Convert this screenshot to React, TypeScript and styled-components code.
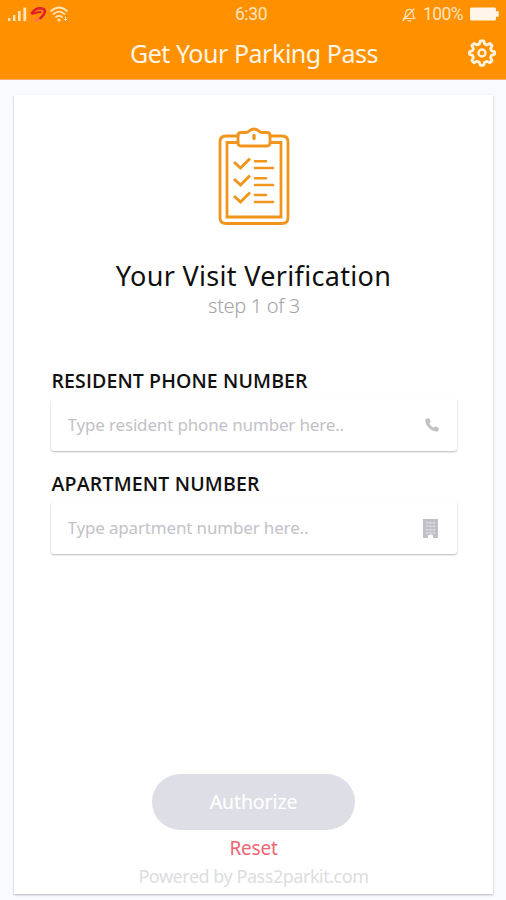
import React from "react";
import styled, { createGlobalStyle } from "styled-components";

const GlobalStyle = createGlobalStyle`
  *, *::before, *::after { box-sizing: border-box; }
  html, body { margin: 0; padding: 0; }
  body { background: #f8faff; font-family: "Noto Sans", "Open Sans", sans-serif; }
`;

const Screen = styled.div`
  width: 506px;
  height: 900px;
  display: flex;
  flex-direction: column;
  overflow: hidden;
  background: #f8faff;
`;

const Header = styled.header`
  height: 80px;
  flex: none;
  background: #ff9100;
  border-bottom: 1px solid #ffab66;
`;

const StatusBar = styled.div`
  height: 27px;
  display: grid;
  grid-template-columns: 1fr auto 1fr;
  align-items: center;
  padding: 0 7px 0 7px;
  font: 400 17.5px/27px Roboto, sans-serif;
  color: #ffe3bd;
`;

const StatusGroup = styled.div<{ $end?: boolean }>`
  display: flex;
  align-items: center;
  justify-content: ${(p) => (p.$end ? "flex-end" : "flex-start")};
  gap: ${(p) => (p.$end ? "7px" : "3px")};
`;

const Clock = styled.span`
  margin: 1px 2px 0 -2px;
  letter-spacing: -0.4px;
`;

const Percent = styled.span`
  letter-spacing: -0.55px;
`;

const TitleBar = styled.div`
  height: 52px;
  display: grid;
  grid-template-columns: 1fr auto 1fr;
  align-items: center;
  padding: 0 10px;
`;

const Title = styled.h1`
  grid-column: 2;
  margin: 0 -1px 0 1px;
  font-size: 25px;
  font-weight: 400;
  line-height: 50px;
  letter-spacing: -0.46px;
  color: #fff5e6;
  white-space: nowrap;
`;

const SettingsButton = styled.button`
  justify-self: end;
  width: 28px;
  height: 28px;
  padding: 0;
  border: 0;
  background: none;
  color: #fff3df;
  display: flex;
`;

const Card = styled.main`
  width: 479px;
  height: 799px;
  margin: 15px 0 0 14px;
  flex: none;
  padding: 32px 37px 0;
  background: #fff;
  box-shadow: 0 1px 2px rgba(30, 35, 45, 0.32);
  display: flex;
  flex-direction: column;
  align-items: center;
`;

const Heading = styled.h2`
  margin: 30px 0 0;
  font-size: 27px;
  font-weight: 400;
  line-height: 36px;
  letter-spacing: 0.32px;
  color: #101010;
  white-space: nowrap;
`;

const Step = styled.p`
  margin: -1px 0 0 1px;
  font-size: 20px;
  font-weight: 300;
  line-height: 25px;
  letter-spacing: -0.35px;
  color: #a2a2a8;
`;

const Form = styled.form`
  width: 406px;
  margin-top: 49px;
  display: flex;
  flex-direction: column;
  gap: 19px;
`;

const Field = styled.div`
  height: 84px;
  display: flex;
  flex-direction: column;
`;

const Label = styled.label<{ $spacing: number }>`
  height: 32px;
  font: 600 19.5px/27px "Open Sans", sans-serif;
  letter-spacing: ${(p) => p.$spacing}px;
  color: #111;
  padding-left: 1px;
  white-space: nowrap;
`;

const InputBox = styled.div`
  height: 52px;
  display: flex;
  align-items: center;
  justify-content: space-between;
  padding: 0 18px 0 17px;
  border-radius: 3px;
  background: #fff;
  box-shadow: 0 1px 2px rgba(0, 0, 0, 0.28);
  color: #c2c2c8;
`;

const Input = styled.input`
  width: 320px;
  padding: 0;
  border: 0;
  outline: 0;
  background: transparent;
  font: 400 17px/26px "Noto Sans", sans-serif;
  letter-spacing: -0.16px;
  &::placeholder { color: #c2c2c8; opacity: 1; }
`;

const Actions = styled.div`
  margin-top: 220px;
  display: flex;
  flex-direction: column;
  align-items: center;
`;

const Authorize = styled.button`
  width: 203px;
  height: 56px;
  padding: 0;
  border: 0;
  border-radius: 28px;
  background: #dedfe6;
  color: #fff;
  font: 400 19.5px/54px "Noto Sans", sans-serif;
  letter-spacing: -0.1px;
`;

const Reset = styled.button`
  margin-top: 3px;
  height: 30px;
  padding: 0;
  border: 0;
  background: none;
  color: #ef6673;
  font: 400 19px/30px "Noto Sans", sans-serif;
  letter-spacing: -0.2px;
`;

const Powered = styled.footer`
  font-size: 18px;
  line-height: 26px;
  letter-spacing: -0.47px;
  color: #dcdde0;
  white-space: nowrap;
`;

const SignalIcon = () => (
  <svg width="20" height="14" viewBox="0 0 20 14" fill="currentColor">
    <rect x="1" y="11" width="2.4" height="3" />
    <rect x="6" y="8" width="2.4" height="6" />
    <rect x="11" y="4" width="2.6" height="10" />
    <rect x="16.4" y="0.5" width="2.8" height="13.5" />
  </svg>
);

const CarrierIcon = () => (
  <svg width="17" height="17" viewBox="0 0 17 17" fill="none" strokeLinecap="round" strokeLinejoin="round">
    <path d="M2 7C5 3 9 1.800 12 2.500c5 1 2.500 6.500-1.500 9.500C8.500 13.500 6.500 14.500 5 14" stroke="#ff7452" strokeWidth="2.600" />
    <path d="M2 7C5 3 9 1.800 12 2.500c5 1 2.500 6.500-1.500 9.500" stroke="#df1f29" strokeWidth="2.600" />
    <path d="M2 7.500C5 8 7.500 5.800 10.500 6" stroke="#df1f29" strokeWidth="2.200" />
  </svg>
);

const WifiIcon = () => (
  <svg width="19" height="16" viewBox="0 0 19 16" fill="none" stroke="currentColor" strokeWidth="1.7" strokeLinecap="round">
    <path d="M1 5Q9-2 17 5M3.5 8Q9 3.4 14.5 8M6 11Q9 8.6 12 11" />
    <circle cx="9" cy="14" r="0.7" fill="currentColor" />
    <path d="M15.5 11v3M14 13l1.5 1.5L17 13" strokeWidth="1" />
  </svg>
);

const MutedBellIcon = () => (
  <svg width="14" height="15" viewBox="0 0 14 15" fill="none" stroke="currentColor" strokeWidth="1.2" strokeLinecap="round">
    <path d="M2 11.5h10.5c-1.5-1.5-1.5-2.500-1.500-5 0-5.500-7-5.500-7.500 0 0 2.500 0 3.500-1.500 5ZM6 13.800h3M1 13.500 12 2" />
  </svg>
);

const BatteryIcon = () => (
  <svg width="29" height="14" viewBox="0 0 29 14" fill="#fff5e8">
    <rect width="26" height="13" y="0.5" rx="1.5" />
    <rect x="26" y="4" width="2.7" height="6" rx="1" />
  </svg>
);

const GearIcon = () => (
  <svg width="28" height="28" viewBox="0 0 28 28" fill="none" stroke="currentColor" strokeWidth="2.8" strokeLinejoin="round">
    <path d="M11.3 5 12.400 1.800h3.200L16.700 5l2.200.9 3-1.500 2.200 2.200-1.500 3 .9 2.200 3.100 1.100v2.400l-3.100 1.100-.9 2.200 1.500 3-2.200 2.200-3-1.500-2.200.9-1.100 3.100h-3.200L11.300 23.200l-2.200-.9-3 1.500-2.200-2.200 1.500-3-.9-2.200-3-1.100v-2.400l3-1.100.9-2.200-1.500-3L6.100 4.400l3 1.500Z" />
    <circle cx="14" cy="14" r="3.5" strokeWidth="2.400" />
  </svg>
);

const ClipboardIcon = () => (
  <svg width="72" height="101" viewBox="0 0 72 101" fill="none" stroke="#f1951d" strokeWidth="2.8" strokeLinecap="round" strokeLinejoin="round">
    <path d="M20 9H8q-6 0-6 6v75.500q0 6 6 6h56q6 0 6-6V15q0-6-6-6H52" />
    <path d="M20 15.500H9V90h54V15.500H52" strokeLinejoin="miter" />
    <path d="M23 5.500h5c3 0 4-3.500 8-3.500s5 3.500 8 3.500h5q3 0 3 3V16q0 3-3 3H23q-3 0-3-3V8.500q0-3 3-3Z" />
    <path d="M36 8.500v3" strokeWidth="3.400" />
    <path d="m16 35 6.500 6L32 31.500M16 52l6.500 6L32 48.500M16 69l6.500 6L32 65.500" strokeLinecap="butt" strokeLinejoin="miter" strokeWidth="3" />
    <path d="M37 34.300h11M37 41h18M37 51.200h11M37 58h18M37 68h11M37 75h18" strokeWidth="2.600" />
  </svg>
);

const PhoneIcon = () => (
  <svg width="14" height="14" viewBox="0 0 14 14" fill="#bfbfc5">
    <path d="M1 1.200 3.600.5q.5 0 .7.500l1 2.700q.1.500-.3.900L4 5.600C5 7.600 6.500 9 8.500 10l1-1.100q.4-.4.900-.2l2.700 1q.5.200.4.700l-.6 2.400q-.1.500-.7.500C5.600 13.100.8 8 .6 1.800q0-.5.4-.6Z" stroke="#bfbfc5" strokeWidth="0.500" />
  </svg>
);

const BuildingIcon = () => (
  <svg width="15" height="19" viewBox="0 0 15 19">
    <path d="M0 0h15v19h-5v-2.500q-2.500-2-5 0V19H0Z" fill="#c0c0c8" />
    <path d="M3 3.800h9M3 7.300h9M3 10.800h9M3 14h9" stroke="#dcdce2" strokeWidth="1.600" strokeDasharray="2.400 0.900" />
  </svg>
);

const FieldIcon = styled.span<{ $end?: boolean }>`
  width: 16px;
  display: flex;
  justify-content: ${(p) => (p.$end ? "flex-end" : "center")};
`;

export default function App() {
  return (
    <>
      <GlobalStyle />
      <Screen>
        <Header>
          <StatusBar>
            <StatusGroup>
              <SignalIcon />
              <CarrierIcon />
              <WifiIcon />
            </StatusGroup>
            <Clock>6:30</Clock>
            <StatusGroup $end>
              <MutedBellIcon />
              <Percent>100%</Percent>
              <BatteryIcon />
            </StatusGroup>
          </StatusBar>
          <TitleBar>
            <Title>Get Your Parking Pass</Title>
            <SettingsButton aria-label="Settings">
              <GearIcon />
            </SettingsButton>
          </TitleBar>
        </Header>
        <Card>
          <ClipboardIcon />
          <Heading>Your Visit Verification</Heading>
          <Step>step 1 of 3</Step>
          <Form>
            <Field>
              <Label htmlFor="phone" $spacing={0.12}>RESIDENT PHONE NUMBER</Label>
              <InputBox>
                <Input id="phone" placeholder="Type resident phone number here.." />
                <FieldIcon $end><PhoneIcon /></FieldIcon>
              </InputBox>
            </Field>
            <Field>
              <Label htmlFor="apartment" $spacing={0.18}>APARTMENT NUMBER</Label>
              <InputBox>
                <Input id="apartment" placeholder="Type apartment number here.." />
                <FieldIcon><BuildingIcon /></FieldIcon>
              </InputBox>
            </Field>
          </Form>
          <Actions>
            <Authorize type="button">Authorize</Authorize>
            <Reset type="button">Reset</Reset>
            <Powered>Powered by Pass2parkit.com</Powered>
          </Actions>
        </Card>
      </Screen>
    </>
  );
}
